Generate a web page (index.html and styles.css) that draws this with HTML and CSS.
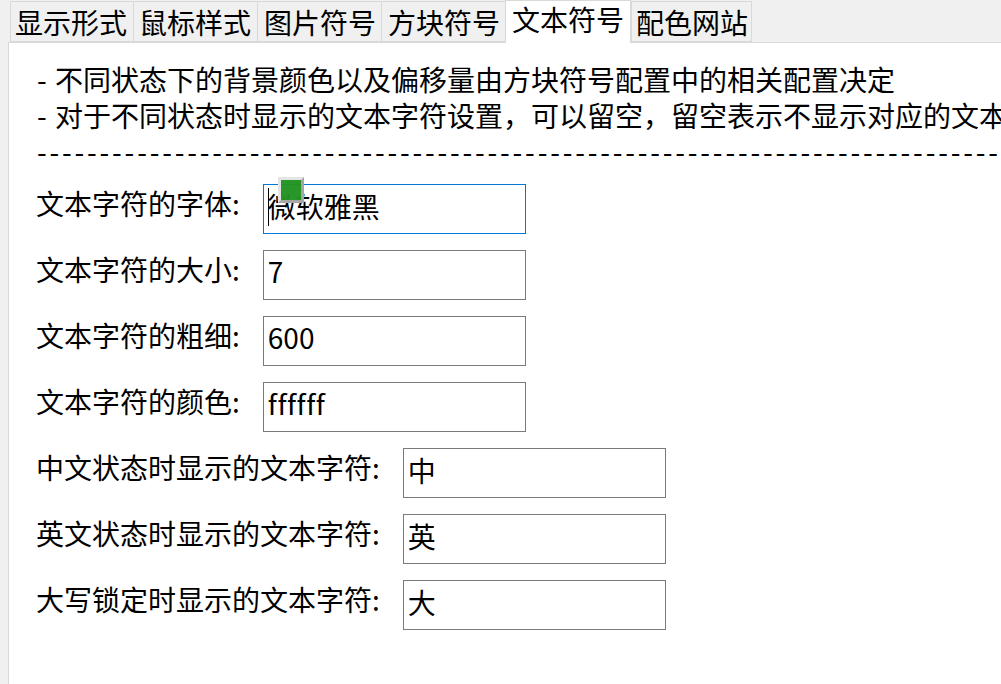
FILE: index.html
```html
<!DOCTYPE html>
<html lang="zh-CN">
<head>
<meta charset="utf-8">
<title>文本符号</title>
<link rel="stylesheet" href="styles.css">
</head>
<body>
<div class="tabs">
  <div class="tab">显示形式</div>
  <div class="tab">鼠标样式</div>
  <div class="tab">图片符号</div>
  <div class="tab">方块符号</div>
  <div class="tab active">文本符号</div>
  <div class="tab">配色网站</div>
</div>
<main class="panel">
  <div class="notes">
    <div>- 不同状态下的背景颜色以及偏移量由方块符号配置中的相关配置决定</div>
    <div>- 对于不同状态时显示的文本字符设置，可以留空，留空表示不显示对应的文本字符</div>
    <div class="dashes">------------------------------------------------------------------------------------</div>
  </div>
  <div class="rows">
    <div class="row"><label class="label">文本字符的字体:</label><span class="field focused">微软雅黑<i class="caret"></i><i class="badge"></i></span></div>
    <div class="row"><label class="label">文本字符的大小:</label><span class="field latin">7</span></div>
    <div class="row"><label class="label">文本字符的粗细:</label><span class="field latin">600</span></div>
    <div class="row"><label class="label">文本字符的颜色:</label><span class="field latin spaced">ffffff</span></div>
    <div class="row"><label class="label">中文状态时显示的文本字符:</label><span class="field">中</span></div>
    <div class="row"><label class="label">英文状态时显示的文本字符:</label><span class="field">英</span></div>
    <div class="row"><label class="label">大写锁定时显示的文本字符:</label><span class="field">大</span></div>
  </div>
</main>
</body>
</html>
```
FILE: styles.css
```css
* { box-sizing: border-box; }
html, body { margin: 0; height: 100%; overflow: hidden; }
body {
  background: #f0f0f0;
  color: #000;
  font-family: "Noto Sans CJK SC", "Noto Sans", sans-serif;
  font-size: 28px;
  display: flex;
  flex-direction: column;
}
.tabs {
  display: flex;
  height: 43px;
  padding-left: 10px;
  position: relative;
  z-index: 1;
}
.tab {
  height: 41px;
  margin-top: 1px;
  width: 124px;
  padding-left: 6px;
  line-height: 40px;
  white-space: nowrap;
  border: 1px solid #d9d9d9;
  border-right-width: 0;
  background: #f0f0f0;
}
.tab:first-child { width: 123px; padding-left: 4px; }
.tab:nth-child(2) { padding-left: 5px; }
.tab:nth-child(6) { width: 121px; border-right-width: 1px; padding-left: 4px; }
.tab.active {
  width: 126px;
  height: 43px;
  margin-top: 0;
  padding-left: 6px;
  line-height: 36px;
  border: 1px solid #d9d9d9;
  border-bottom: 0;
  background: #fff;
}
.panel {
  flex: 1;
  min-height: 0;
  margin-left: 8px;
  margin-top: -1px;
  padding: 18px 0 0 27px;
  background: #fff;
  border-top: 1px solid #d9d9d9;
  border-left: 1px solid #d9d9d9;
  overflow: hidden;
}
.notes {
  padding-left: 1px;
  line-height: 36px;
  word-spacing: 2px;
  white-space: nowrap;
}
.dashes { letter-spacing: 2.8px; }
.rows {
  display: flex;
  flex-direction: column;
  gap: 16px;
  margin-top: 15px;
}
.row {
  display: flex;
  align-items: flex-start;
  height: 50px;
}
.label {
  display: block;
  margin-right: 23px;
  line-height: 38px;
  white-space: nowrap;
}
.field {
  position: relative;
  display: block;
  width: 263px;
  height: 50px;
  padding-left: 4px;
  line-height: 42px;
  border: 1px solid #7a7a7a;
  background: #fff;
}
.field.latin { line-height: 40px; }
.field.spaced { letter-spacing: 0.5px; }
.field.focused { border-color: #0078d7; }
.caret {
  position: absolute;
  left: 4px;
  top: 3px;
  width: 1px;
  height: 38px;
  background: #000;
}
.badge {
  position: absolute;
  left: 14px;
  top: -8px;
  width: 26px;
  height: 26px;
  background: rgba(31, 146, 31, 0.96);
  border: 3px solid #e4e4e4;
  border-right-color: #a6a6a6;
  border-bottom-color: #a6a6a6;
}
```
